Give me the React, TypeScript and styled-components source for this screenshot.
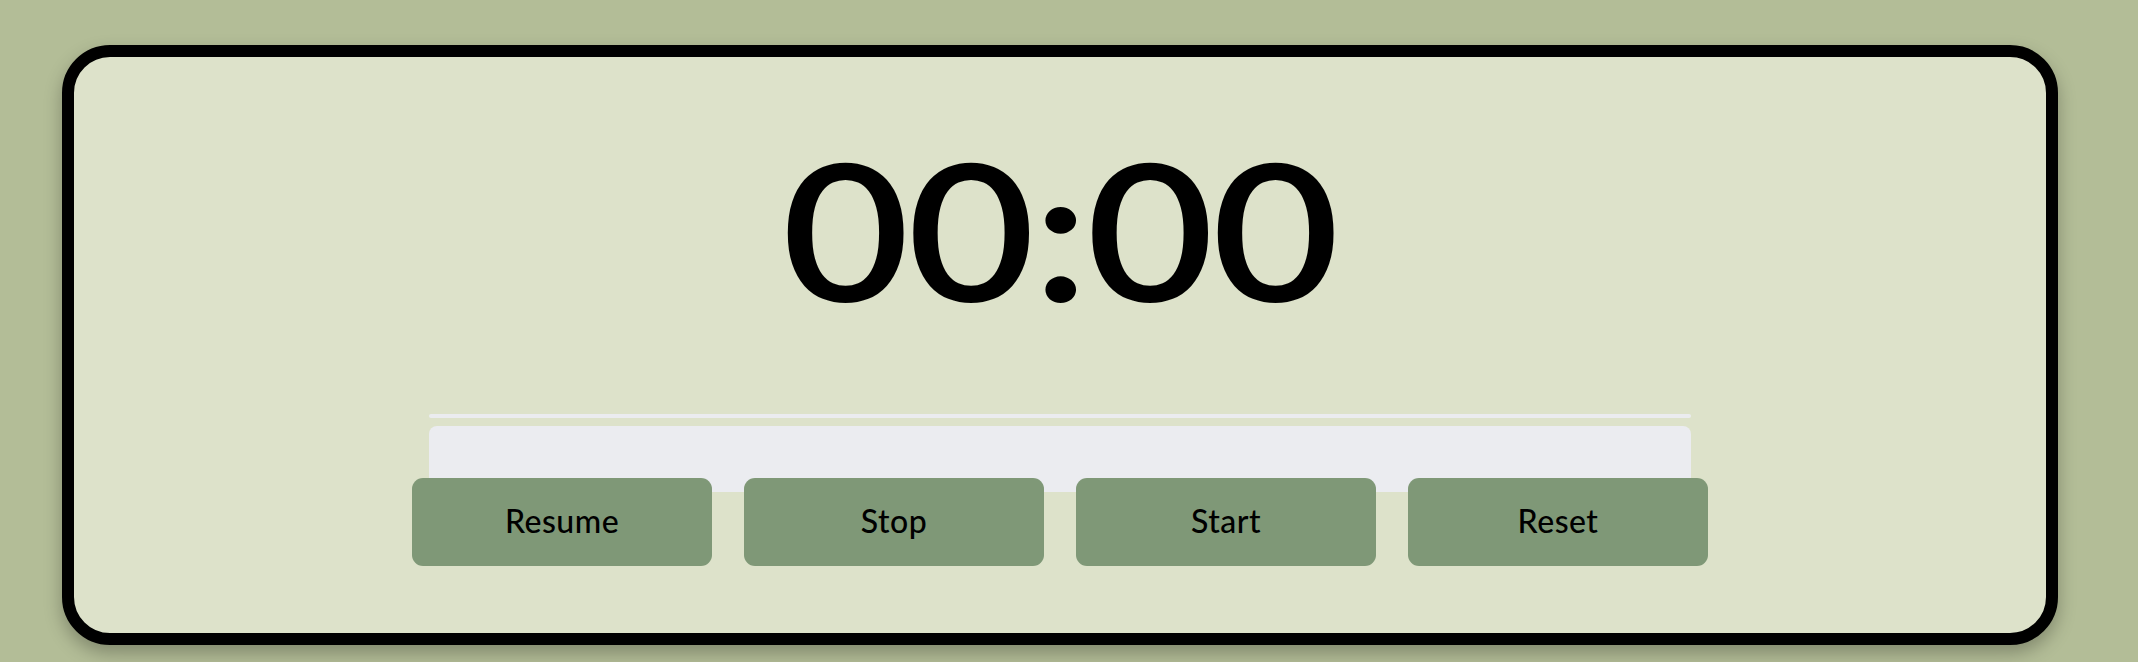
import React from "react";
import styled, { createGlobalStyle } from "styled-components";

const GlobalStyle = createGlobalStyle`
  html, body {
    margin: 0;
    padding: 0;
    background: #b3bd97;
  }
  * { box-sizing: border-box; }
`;

const Page = styled.main`
  padding: 45px 80px 17px 62px;
  background: #b3bd97;
  min-height: 662px;
`;

const Card = styled.section`
  display: flex;
  flex-direction: column;
  align-items: center;
  background: #dde2ca;
  border: 12px solid #000;
  border-radius: 48px;
  box-shadow: 0 8px 18px rgba(0, 0, 0, 0.28);
  padding: 75px 0 67px;
`;

const Timer = styled.div`
  font-family: Lato, sans-serif;
  font-weight: 600;
  font-size: 190px;
  line-height: 192px;
  height: 192px;
  color: #000;
  white-space: nowrap;
  letter-spacing: -2px;
  transform: scaleX(1.16);
`;

const Rule = styled.div`
  width: 1262px;
  height: 4px;
  border-radius: 2px;
  background: #ebecef;
  margin-top: 90px;
`;

const Field = styled.div`
  width: 1262px;
  height: 66px;
  border-radius: 8px 8px 0 0;
  background: #ebecf0;
  margin-top: 8px;
`;

const ButtonRow = styled.div`
  display: flex;
  gap: 32px;
  margin-top: -14px;
`;

const Button = styled.button`
  width: 300px;
  height: 88px;
  border: none;
  border-radius: 11px;
  background: #7f9877;
  color: #000;
  font-family: Lato, sans-serif;
  font-size: 32px;
  font-weight: 500;
  letter-spacing: 0.5px;
  padding: 0 0 4px;
  cursor: pointer;
`;

export default function App() {
  return (
    <>
      <GlobalStyle />
      <Page>
        <Card>
          <Timer>00:00</Timer>
          <Rule />
          <Field />
          <ButtonRow>
            <Button>Resume</Button>
            <Button>Stop</Button>
            <Button>Start</Button>
            <Button>Reset</Button>
          </ButtonRow>
        </Card>
      </Page>
    </>
  );
}
